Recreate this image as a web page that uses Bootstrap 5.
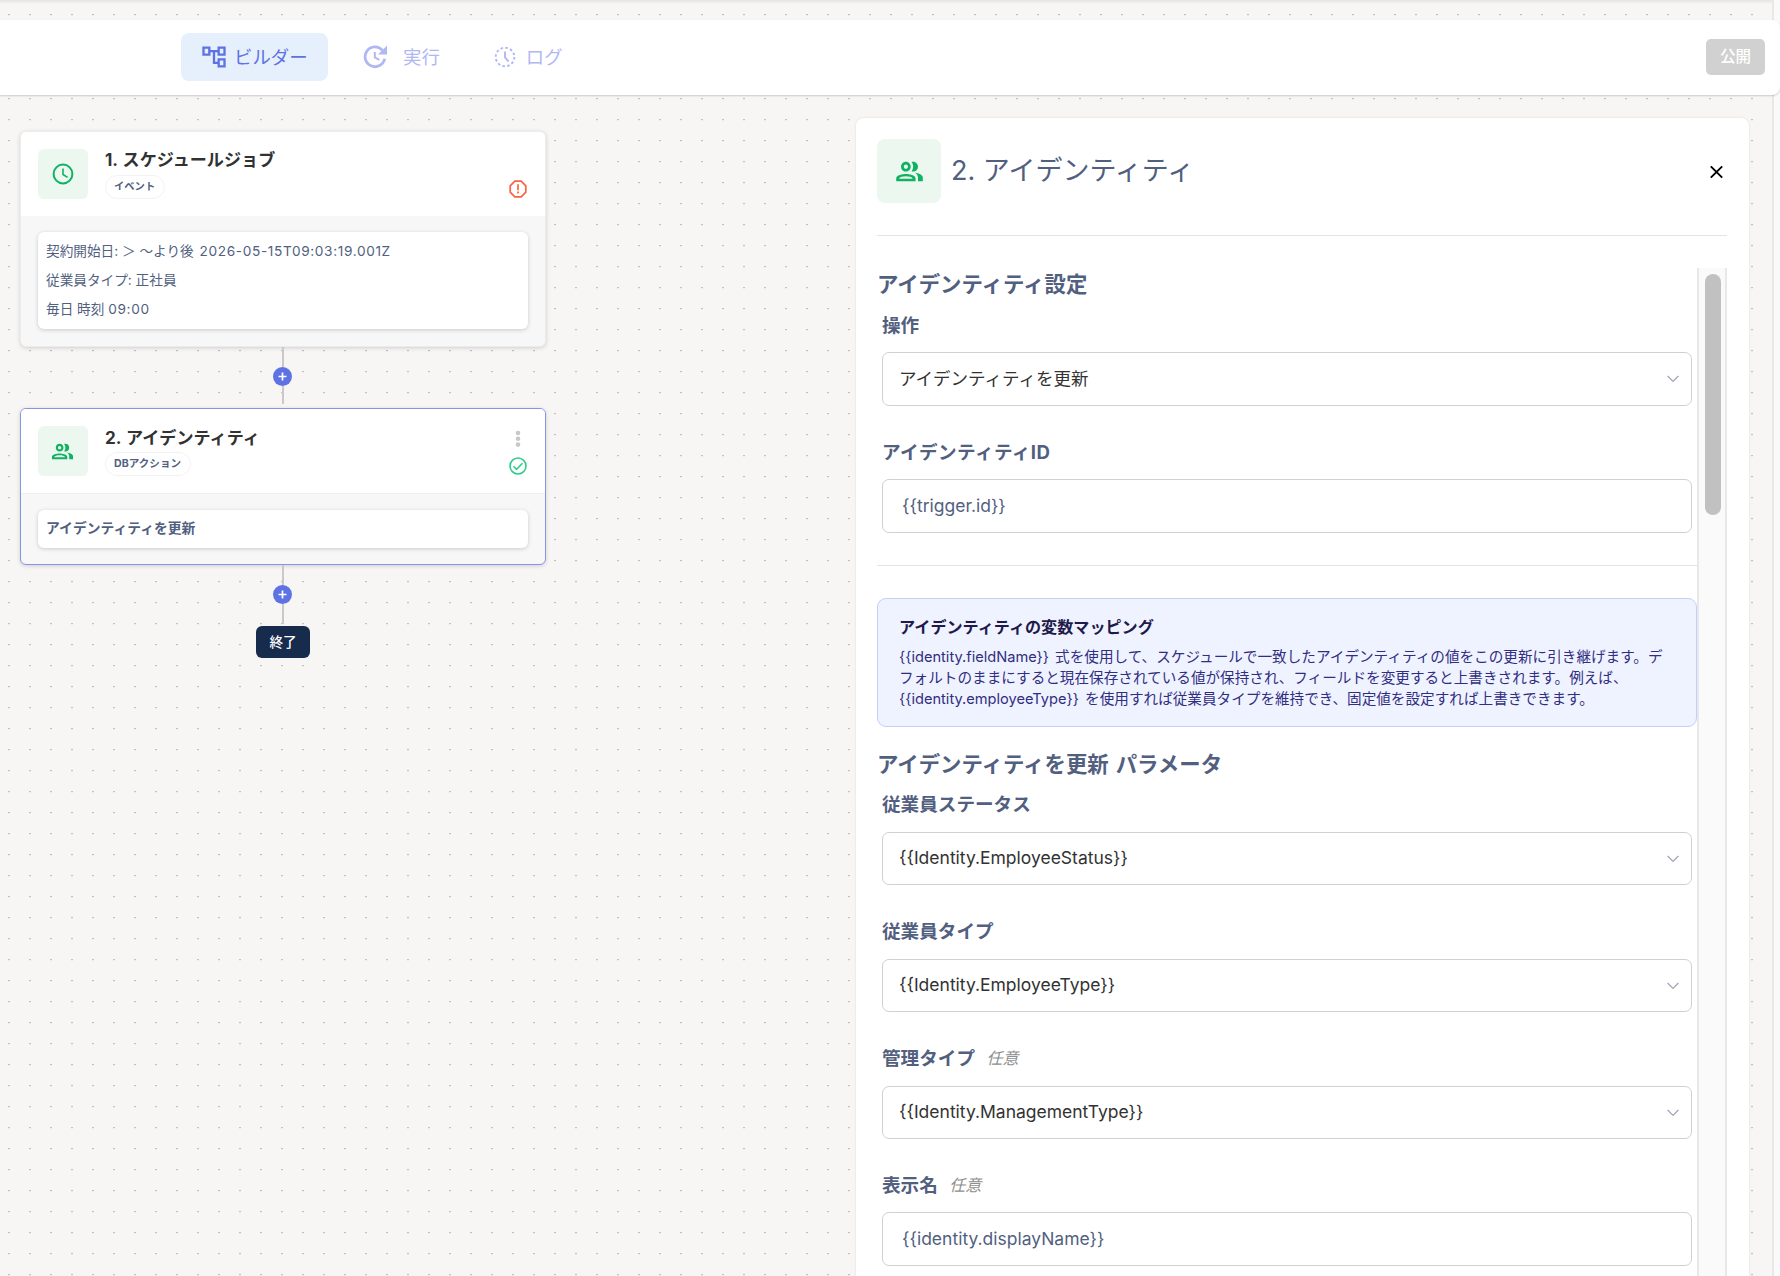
<!DOCTYPE html>
<html lang="ja">
<head>
<meta charset="utf-8">
<title>ワークフロービルダー</title>
<link href="https://cdn.jsdelivr.net/npm/bootstrap@5.3.0/dist/css/bootstrap.min.css" rel="stylesheet">
<style>
body{font-family:Inter,"Noto Sans CJK JP",sans-serif;background:#f7f6f4;height:1276px;overflow:hidden;color:#525f7f}
svg{display:block;flex:none}
.page{width:1780px;height:1276px;background:#fafafa;overflow:hidden;position:relative}
.stage{width:1774px;height:1276px;border-right:2px solid #e8e8e8;background-color:#f7f6f4;
 background-image:linear-gradient(#e3e3e2,rgba(247,246,244,0)),url("data:image/svg+xml,%3Csvg xmlns='http://www.w3.org/2000/svg' width='21' height='21'%3E%3Crect x='8' y='14' width='2' height='1' fill='%23c2c2c2'/%3E%3Crect x='8' y='15' width='2' height='1' fill='%23ecebe9'/%3E%3C/svg%3E");background-size:100% 4px,21px 21px;background-repeat:no-repeat,repeat}
.topbar{position:absolute;left:0;top:20px;width:1780px;height:75px;background:#fff;border-radius:0 8px 8px 0;box-shadow:0 1px 2px rgba(0,0,0,.18);padding:0 15px 2px 181px}
.tab{height:48px;border-radius:8px;font-size:18.4px;line-height:24px;color:#b0b8f4;background:none;border:0;padding:0}
.tab-on{background:#e6f0fd;color:#5e72e4;width:147px;padding-left:19px}
.pub{width:59px;height:36px;border-radius:5px;background:#d1d1d1;color:#fff;font-size:15.5px;font-weight:500;padding:0;border:0}
.flow{width:526px;margin-left:20px;padding-top:131px}
.node{width:526px;border-radius:6px;border:1px solid #ececec;background:#f7f7f7;box-shadow:0 1px 4px rgba(0,0,0,.16)}
.node.sel{border-color:#8794ea}
.node-h{height:84px;background:#fff;border-radius:5px 5px 0 0;padding:17px 18.5px 0 16.5px}
.sel .node-h{height:85px;border-bottom:1px solid #efefef}
.tile{width:50px;height:50px;border-radius:6px;background:#ebf7ef}
.info{margin-left:17.5px}
.ttl{font-size:17.1px;line-height:22px;height:26px;font-weight:700;color:#323232;white-space:nowrap;word-spacing:1px}
.sel .ttl{padding-top:1px}
.pill{display:flex;width:max-content;align-items:center;height:24px;border:1px solid #f3f3f5;border-radius:12px;padding:0 9px 0 8px;font-size:10.3px;font-weight:700;background:#fff}
.sel .pill{font-size:10.6px}
.inner{margin:16px 17px 17px 17px;background:#fff;border-radius:6px;box-shadow:0 1px 4px rgba(0,0,0,.18);font-size:13.65px;padding:5px 8px;white-space:nowrap}
.inner div{height:29px;line-height:28px}
.stamp{letter-spacing:.64px;margin-left:2px}
.sel .inner{margin-bottom:16px;padding:4px 8px 5px;font-size:13.8px;font-weight:700}
.link{width:2px;margin-right:1px;background:#c9c9c9;height:20px}
.plus{width:19px;height:19px;margin-right:1px;border-radius:50%;background:#5e72e4}
.end{width:54px;height:32px;margin-top:2px;border-radius:6px;background:#172b4d;color:#fff;font-size:13.6px;font-weight:500}
.side{position:absolute;left:856px;top:118px;width:893px;height:1180px;background:#fff;border-radius:8px 8px 0 0;box-shadow:0 0 2px 1px rgba(0,0,0,.05);padding:21px 22px 0 21px}
.side-h{height:97px;border-bottom:1px solid #e4e4e4}
.tile-lg{width:64px;height:64px;border-radius:8px}
.side-t{font-size:27px;line-height:40px;margin:12px 0 0 10px}
.body-r{margin-top:32px;height:1010px}
.track{width:30px;background:#fafafa;border-left:2px solid #e8e8e8;border-right:2px solid #e8e8e8;padding:6px 0 0 6px}
.thumb{width:16px;height:241px;border-radius:8px;background:#c1c1c1}
.h-sec{font-size:21.4px;font-weight:700;line-height:32px;margin:0;white-space:nowrap;word-spacing:2px}
.fld{margin:0 5px}
.fld+.fld{margin-top:32px}
.lbl{font-size:18.6px;font-weight:700;line-height:28px;height:28px;display:block;margin:0}
.lbl-id{letter-spacing:.4px}
.opt{font-size:16px;line-height:1;font-weight:400;font-style:italic;color:#8f8f8f;margin-left:7px;vertical-align:1.5px}
.ctl{height:54px;margin-top:13px;border:1px solid #d0d0d0;border-radius:7px;padding:0 12px 0 16px;font-size:17.5px;color:#323232;background:#fff}
.ctl.inp{padding-left:19px;color:#525f7f}
.c53{height:53px;margin-top:14px}
.rule{margin-top:32px;height:1px;background:#e4e4e4}
.note{height:129px;margin-top:32px;border:1px solid #c3cffa;border-radius:9px;background:#eff3ff;color:#312e81;padding:16px 21px 0}
.note-t{font-size:16.1px;font-weight:700;line-height:24px;color:#1e1b4b;margin-bottom:8px}
.note-b{font-size:14.62px;line-height:21px;white-space:nowrap;word-spacing:2px}
</style>
<script src="https://cdn.jsdelivr.net/npm/bootstrap@5.3.0/dist/js/bootstrap.bundle.min.js"></script>
</head>
<body>
<svg width="0" height="0" class="position-absolute"><defs>
<symbol id="people" viewBox="0 0 24 24"><path fill="#0fb261" d="M16.67 13.130C18.040 14.060 19 15.320 19 17v3h4v-3c0-2.180-3.570-3.470-6.330-3.870zM15 12c2.210 0 4-1.790 4-4s-1.790-4-4-4c-.47 0-.91.1-1.330.24C14.500 5.270 15 6.580 15 8s-.5 2.730-1.330 3.760c.42.14.86.24 1.330.24zM9 12c2.210 0 4-1.790 4-4s-1.790-4-4-4-4 1.790-4 4 1.790 4 4 4zm0-5.700c.95 0 1.700.75 1.700 1.700s-.75 1.700-1.700 1.700-1.700-.75-1.700-1.700.75-1.700 1.700-1.700zm0 7.700c-2.670 0-8 .9-8 3.500v2.500h16v-2.500c0-2.600-5.330-3.500-8-3.500zm5.500 4H3.500v-.4C3.800 16.700 6.300 16 9 16s5.200.7 5.500 1.600v.4z"/></symbol>
<symbol id="chev" viewBox="0 0 12 8"><path d="M.6 1 6 6.400 11.400 1" fill="none" stroke="#a3a6bd" stroke-width="1.300"/></symbol>
<symbol id="add" viewBox="0 0 9 9"><path d="M4.500.5v8M.5 4.500h8" stroke="#fff" stroke-width="1.700"/></symbol>
</defs></svg>
<div class="page">
 <main class="stage">
  <div class="flow d-flex flex-column align-items-center">
   <section class="node">
    <div class="node-h d-flex">
     <div class="tile d-flex align-items-center justify-content-center"><svg width="22" height="22" viewBox="0 0 22 22" fill="none" stroke="#0fb261" stroke-width="2"><circle cx="11" cy="11" r="9.400"/><path d="M11 5.500V11.500l4.600 2.900" stroke-width="1.600"/></svg></div>
     <div class="info flex-grow-1"><div class="ttl">1. スケジュールジョブ</div><div class="pill">イベント</div></div>
     <svg class="align-self-start" style="margin-top:31px" width="18" height="18" viewBox="0 0 18 18" fill="none" stroke="#fb6340" stroke-width="1.700"><path d="M5.800 1.200h6.400l4.600 4.600v6.400l-4.600 4.600H5.800L1.200 12.200V5.800z"/><path d="M9 4.300v6M9 11.600v1.900"/></svg>
    </div>
    <div class="inner"><div>契約開始日: ＞ 〜より後 <span class="stamp">2026-05-15T09:03:19.001Z</span></div><div>従業員タイプ: 正社員</div><div>毎日 時刻 <span class="stamp" style="margin-left:0">09:00</span></div></div>
   </section>
   <div class="link"></div><div class="plus d-flex align-items-center justify-content-center"><svg width="9" height="9"><use href="#add"/></svg></div><div class="link" style="height:18px;margin-bottom:4px"></div>
   <section class="node sel">
    <div class="node-h d-flex">
     <div class="tile d-flex align-items-center justify-content-center"><svg width="23" height="23"><use href="#people"/></svg></div>
     <div class="info flex-grow-1"><div class="ttl">2. アイデンティティ</div><div class="pill">DBアクション</div></div>
     <div class="d-flex flex-column align-items-center" style="padding-top:4px"><svg width="6" height="18" fill="#c8c8c8"><circle cx="3" cy="3" r="2.300"/><circle cx="3" cy="8.800" r="2.300"/><circle cx="3" cy="14.600" r="2.300"/></svg><svg style="margin-top:9px" width="18" height="18" viewBox="0 0 18 18" fill="none" stroke="#2dce89" stroke-width="1.600"><circle cx="9" cy="9" r="8"/><path d="m4.500 9.300 3 3 6-6"/></svg></div>
    </div>
    <div class="inner"><div>アイデンティティを更新</div></div>
   </section>
   <div class="link"></div><div class="plus d-flex align-items-center justify-content-center"><svg width="9" height="9"><use href="#add"/></svg></div><div class="link"></div>
   <div class="end d-flex align-items-center justify-content-center">終了</div>
  </div>
 </main>
 <header class="topbar d-flex align-items-center justify-content-between">
  <nav class="d-flex">
   <button class="tab tab-on d-flex align-items-center"><svg width="28" height="28" viewBox="0 0 24 24" fill="#5e72e4"><path d="M22 11V3h-7v3H9V3H2v8h7V8h2v10h4v3h7v-8h-7v3h-2V8h2v3h7zM7 9H4V5h3v4zm10 6h3v4h-3v-4zm0-10h3v4h-3V5z"/></svg><span style="margin-left:6px">ビルダー</span></button>
   <button class="tab d-flex align-items-center" style="margin-left:35px"><svg width="26" height="26" viewBox="0 0 26 26" fill="none" stroke="#b0b8f4" stroke-width="2.800"><path d="M19.400 6.200A9.900 9.900 0 1 0 21.700 14.800"/><path d="M24 1.500v9h-9z" fill="#b0b8f4" stroke="none"/><path d="M11.800 8v5.300l4.500 2.600" stroke-width="2"/></svg><span style="margin-left:14px">実行</span></button>
   <button class="tab d-flex align-items-center" style="margin-left:54px"><svg width="22" height="22" viewBox="0 0 22 22" fill="none" stroke="#b0b8f4" stroke-width="1.900"><circle cx="11" cy="11" r="9.300" stroke-dasharray="2.600 2.270"/><path d="M11 5.500v6l3.500 4"/></svg><span style="margin-left:10px">ログ</span></button>
  </nav>
  <button class="btn pub">公開</button>
 </header>
 <aside class="side">
  <div class="side-h d-flex align-items-start">
   <div class="tile tile-lg d-flex align-items-center justify-content-center"><svg width="29" height="29"><use href="#people"/></svg></div>
   <div class="side-t">2. アイデンティティ</div>
   <svg class="ms-auto" style="margin:26px 4px 0 0" width="13" height="14" viewBox="0 0 13 14"><path d="m.8 1.300 11.400 11.400M12.200 1.300.8 12.700" stroke="#000" stroke-width="1.900"/></svg>
  </div>
  <div class="body-r d-flex">
   <div class="flex-grow-1">
    <h2 class="h-sec">アイデンティティ設定</h2>
    <div class="fld" style="margin-top:11px"><label class="lbl">操作</label><div class="ctl d-flex align-items-center justify-content-between"><span>アイデンティティを更新</span><svg width="12" height="8"><use href="#chev"/></svg></div></div>
    <div class="fld"><label class="lbl lbl-id">アイデンティティID</label><div class="ctl inp d-flex align-items-center">{{trigger.id}}</div></div>
    <div class="rule"></div>
    <div class="note"><div class="note-t">アイデンティティの変数マッピング</div><div class="note-b">{{identity.fieldName}} 式を使用して、スケジュールで一致したアイデンティティの値をこの更新に引き継げます。デ<br>フォルトのままにすると現在保存されている値が保持され、フィールドを変更すると上書きされます。例えば、<br>{{identity.employeeType}} を使用すれば従業員タイプを維持でき、固定値を設定すれば上書きできます。</div></div>
    <h2 class="h-sec" style="margin-top:21px">アイデンティティを更新 パラメータ</h2>
    <div class="fld" style="margin-top:10px"><label class="lbl">従業員ステータス</label><div class="ctl c53 d-flex align-items-center justify-content-between"><span>{{Identity.EmployeeStatus}}</span><svg width="12" height="8"><use href="#chev"/></svg></div></div>
    <div class="fld"><label class="lbl">従業員タイプ</label><div class="ctl c53 d-flex align-items-center justify-content-between"><span>{{Identity.EmployeeType}}</span><svg width="12" height="8"><use href="#chev"/></svg></div></div>
    <div class="fld"><label class="lbl">管理タイプ <span class="opt">任意</span></label><div class="ctl c53 d-flex align-items-center justify-content-between"><span>{{Identity.ManagementType}}</span><svg width="12" height="8"><use href="#chev"/></svg></div></div>
    <div class="fld"><label class="lbl">表示名 <span class="opt">任意</span></label><div class="ctl inp d-flex align-items-center">{{identity.displayName}}</div></div>
   </div>
   <div class="track"><div class="thumb"></div></div>
  </div>
 </aside>
</div>
</body>
</html>
